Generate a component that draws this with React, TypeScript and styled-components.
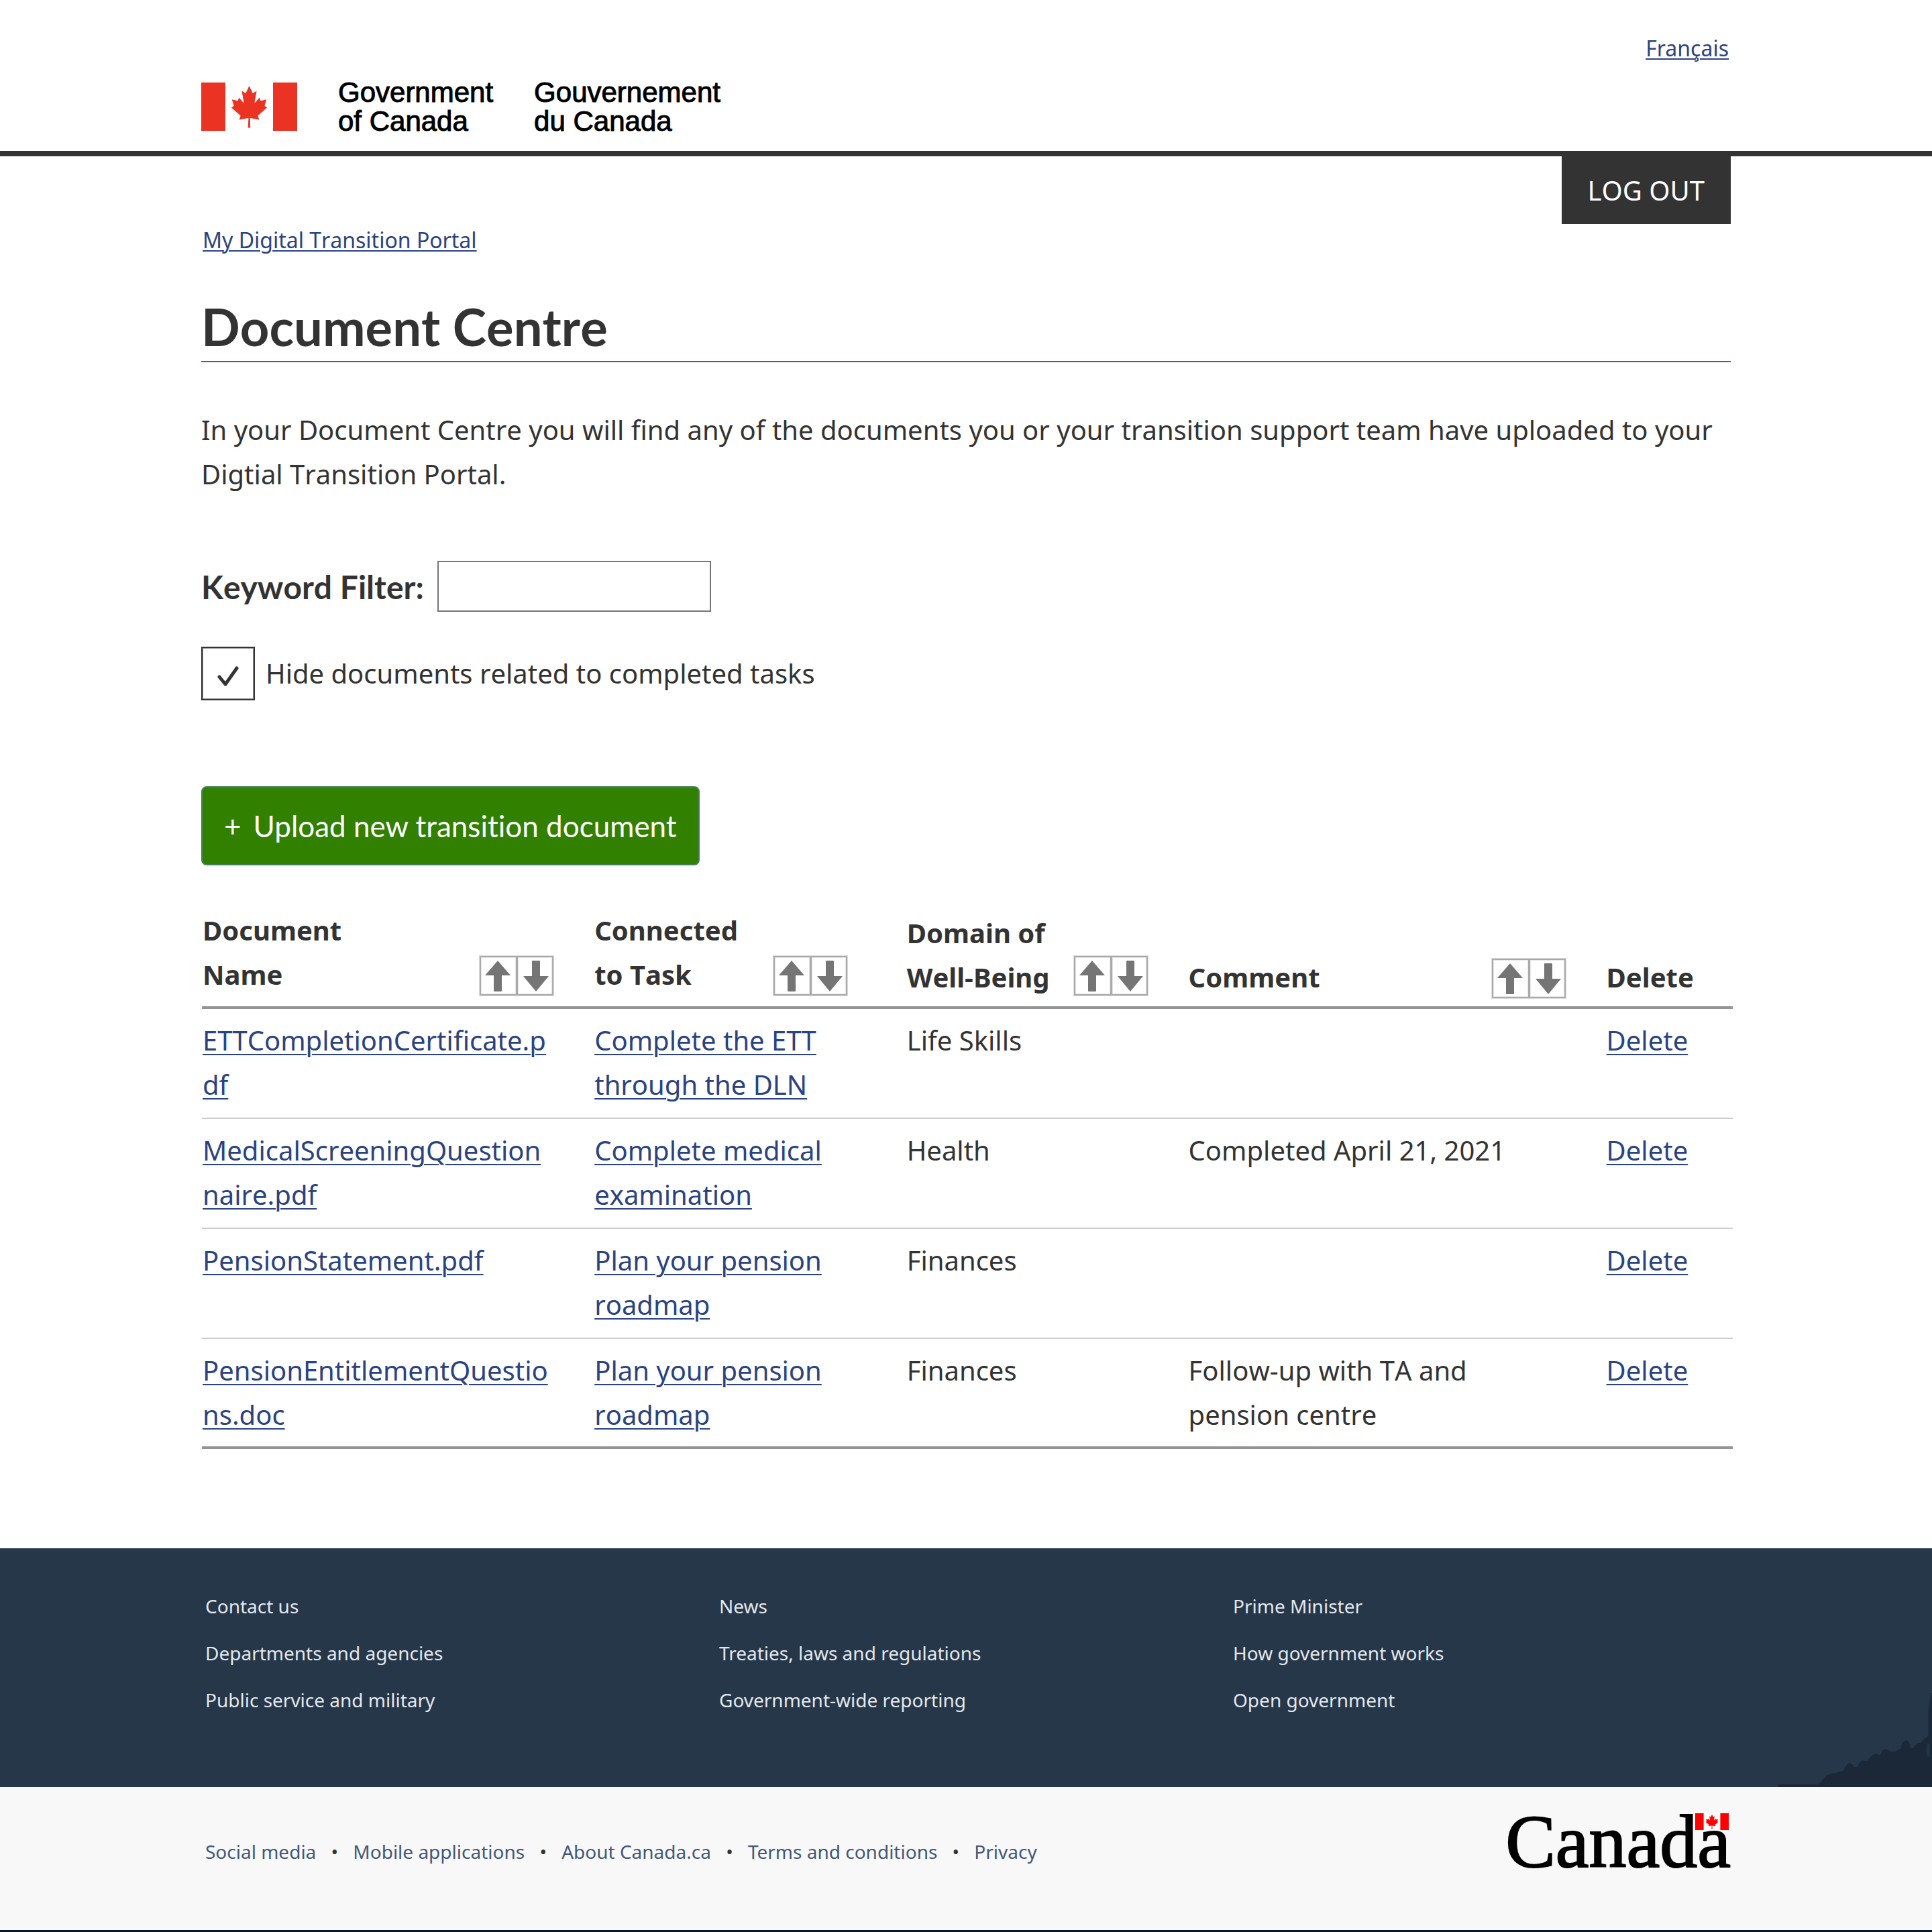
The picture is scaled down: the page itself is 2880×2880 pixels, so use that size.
import React, { useState } from "react";
import styled, { createGlobalStyle } from "styled-components";

const GlobalStyle = createGlobalStyle`
  *, *::before, *::after { box-sizing: border-box; }
  body {
    margin: 0;
    background: #fff;
    color: #333;
    font-family: "Noto Sans", "Open Sans", sans-serif;
    font-size: 40px;
    line-height: 66px;
  }
  main { font-kerning: none; }
`;

const Container = styled.div`
  width: 92%;
  max-width: 2280px;
  margin: 0 auto;
`;

const Link = styled.a<{ $small?: boolean }>`
  color: #2b4380;
  font-size: ${(p) => (p.$small ? "32px" : "40px")};
  line-height: ${(p) => (p.$small ? "44px" : "66px")};
  text-decoration: underline 2px;
  text-underline-offset: ${(p) => (p.$small ? "3px" : "5px")};
`;

/* ---------- Header ---------- */

const Header = styled.header`
  padding: 50px 0 23px;
  border-bottom: 8px solid #333;
`;

const LanguageBar = styled.div`
  display: flex;
  justify-content: flex-end;
  padding-right: 3px;
  margin-bottom: 22px;
`;

const Brand = styled.div`
  display: flex;
  align-items: center;
  gap: 61px;
`;

const BrandName = styled.span`
  font-family: "Liberation Sans", Arial, sans-serif;
  font-size: 42px;
  line-height: 43px;
  color: #000;
  -webkit-text-stroke: 1px #000;
`;

const LEAF =
  "m-90 2030 45-863a95 95 0 0 0-111-98l-859 151 116-320a65 65 0 0 0-20-73l-941-762 212-99a65 65 0 0 0 34-79l-186-572 542 115a65 65 0 0 0 73-38l105-247 423 454a65 65 0 0 0 111-57l-204-1052 327 189a65 65 0 0 0 91-27l332-652 332 652a65 65 0 0 0 91 27l327-189-204 1052a65 65 0 0 0 111 57l423-454 105 247a65 65 0 0 0 73 38l542-115-186 572a65 65 0 0 0 34 79l212 99-941 762a65 65 0 0 0-20 73l116 320-859-151a95 95 0 0 0-111 98l45 863z";

function Flag({ width, height, color }: { width: number; height: number; color: string }) {
  return (
    <svg width={width} height={height} viewBox="0 0 143 72" preserveAspectRatio="none" aria-hidden="true">
      <rect x="36" width="71" height="72" fill="#fff" />
      <rect width="36" height="72" fill={color} />
      <rect x="107" width="36" height="72" fill={color} />
      <path
        d={LEAF}
        transform="translate(71.5 36.3) scale(0.0139 0.0151)"
        fill={color}
        stroke={color}
        strokeWidth="70"
      />
    </svg>
  );
}

/* ---------- Page top ---------- */

const SessionBar = styled.div`
  display: flex;
  justify-content: flex-end;
`;

const LogoutButton = styled.button`
  border: 0;
  padding: 18px 39px 17px;
  background: #333;
  color: #fff;
  font: inherit;
  text-transform: uppercase;
  cursor: pointer;
`;

const Breadcrumb = styled.nav`
  display: flex;
  padding: 2px;
`;

const Title = styled.h1`
  margin: 59px 0 68px;
  padding-bottom: 5px;
  border-bottom: 2px solid #af3c43;
  font-family: Lato, sans-serif;
  font-size: 76px;
  line-height: 92px;
  font-weight: 700;
`;

const Intro = styled.p`
  margin: 0 0 96px;
`;

/* ---------- Filters ---------- */

const FilterRow = styled.div`
  display: flex;
  align-items: center;
  gap: 20px;
`;

const FilterLabel = styled.label`
  padding-top: 2px;
  font-family: Lato, sans-serif;
  font-size: 48px;
  line-height: 58px;
  font-weight: 700;
`;

const FilterInput = styled.input`
  width: 408px;
  height: 76px;
  padding: 0 16px;
  border: 2px solid #757575;
  background: #fff;
  color: inherit;
  font: inherit;
`;

const CheckRow = styled.label`
  display: flex;
  align-items: center;
  gap: 16px;
  width: fit-content;
  margin: 52px 0 128px;
`;

const CheckBox = styled.span`
  display: grid;
  width: 80px;
  height: 80px;

  > * {
    grid-area: 1 / 1;
  }

  > svg {
    place-self: center;
    pointer-events: none;
    visibility: hidden;
  }

  > input:checked + svg {
    visibility: visible;
  }
`;

const CheckInput = styled.input`
  appearance: none;
  width: 80px;
  height: 80px;
  margin: 0;
  border: 2px solid #333;
  box-shadow: inset 0 0 0 1px #999;
  background: #fff;
`;

const UploadButton = styled.button`
  display: flex;
  align-items: center;
  gap: 18px;
  padding: 24px 32px;
  border: 2px solid #458259;
  border-radius: 8px;
  background: #318000;
  color: #fff;
  font-family: Lato, sans-serif;
  font-size: 44px;
  line-height: 66px;
  font-kerning: normal;
  font-variant-ligatures: none;
  cursor: pointer;
`;

/* ---------- Table ---------- */

const Table = styled.table`
  width: calc(100% + 2px);
  margin: 64px 0 148px 1px;
  table-layout: fixed;
  border-collapse: separate;
  border-spacing: 0;
  text-align: left;
`;

const Col = styled.col<{ $share?: number }>`
  width: ${(p) => (p.$share ? `${p.$share}%` : "auto")};
`;

const HeadCell = styled.th<{ $gap?: number; $raised?: boolean }>`
  padding: 0 ${(p) => p.$gap ?? 59}px ${(p) => (p.$raised ? 14 : 10)}px 1px;
  border-bottom: 4px solid #959595;
  vertical-align: bottom;
`;

const HeadContent = styled.div`
  display: flex;
  align-items: flex-end;
  justify-content: space-between;
`;

const Sorter = styled.span<{ $lift: number }>`
  display: flex;
  flex: none;
  margin-bottom: ${(p) => p.$lift}px;
  outline: 1px solid #ddd;
  outline-offset: -1px;
  padding: 1px;
`;

const SortButton = styled.button`
  display: flex;
  align-items: center;
  justify-content: center;
  width: 56px;
  height: 59px;
  padding: 0 2px 0 0;
  border: 2px solid #aaa;
  box-shadow: inset 0 0 0 1px #e6e6e6;
  background: #fff;
  color: #757575;
  cursor: pointer;

  & + & {
    width: 54px;
    padding: 0 0 0 3px;
    border-left-width: 1px;
  }

  > svg {
    flex: none;
  }
`;

const Cell = styled.td<{ $gap?: number; $breakAll?: boolean }>`
  padding: 14px ${(p) => p.$gap ?? 59}px 16px 1px;
  border-bottom: 2px solid #ccc;
  vertical-align: top;
  word-break: ${(p) => (p.$breakAll ? "break-all" : "normal")};

  tr:last-child > & {
    padding-bottom: 14px;
    border-bottom: 4px solid #959595;
  }
`;

/* ---------- Footer ---------- */

const FooterMain = styled.section`
  position: relative;
  padding: 67px 0 111px;
  background: #26374a;
`;

const FooterColumns = styled.ul`
  display: grid;
  grid-template-columns: repeat(3, 1fr);
  grid-template-rows: repeat(3, auto);
  grid-auto-flow: column;
  gap: 32px 24px;
  margin: 0;
  padding: 0 0 0 6px;
  list-style: none;
  font-size: 28px;
  line-height: 38px;
`;

const FooterLink = styled.a<{ $dark?: boolean }>`
  color: ${(p) => (p.$dark ? "#42577a" : "#e4e8ec")};
  text-decoration: none;
`;

const Skyline = styled.svg`
  position: absolute;
  right: 0;
  bottom: 0;
`;

const FooterBar = styled.section`
  padding: 31px 0 82px;
  border-bottom: 3px solid #06182a;
  background: #f8f8f8;
`;

const FooterBarContent = styled(Container)`
  display: flex;
  justify-content: space-between;
`;

const BarLinks = styled.ul`
  display: flex;
  margin: 0;
  padding: 46px 0 0 6px;
  list-style: none;
  font-size: 28px;
  line-height: 38px;

  > li + li::before {
    content: "•";
    display: inline-block;
    width: 55px;
    text-align: center;
    color: #333;
  }
`;

const Wordmark = styled.div`
  position: relative;
  font-family: "Liberation Serif", "Times New Roman", serif;
  font-size: 112px;
  line-height: 100px;
  color: #000;
  -webkit-text-stroke: 2px #000;

  > svg {
    position: absolute;
    top: 8px;
    right: 3px;
  }
`;

interface Doc {
  name: string;
  task: string;
  domain: string;
  comment: string;
}

const documents: Doc[] = [
  { name: "ETTCompletionCertificate.pdf", task: "Complete the ETT through the DLN", domain: "Life Skills", comment: "" },
  { name: "MedicalScreeningQuestionnaire.pdf", task: "Complete medical examination", domain: "Health", comment: "Completed April 21, 2021" },
  { name: "PensionStatement.pdf", task: "Plan your pension roadmap", domain: "Finances", comment: "" },
  { name: "PensionEntitlementQuestions.doc", task: "Plan your pension roadmap", domain: "Finances", comment: "Follow-up with TA and pension centre" },
];

const footerLinks = [
  "Contact us",
  "Departments and agencies",
  "Public service and military",
  "News",
  "Treaties, laws and regulations",
  "Government-wide reporting",
  "Prime Minister",
  "How government works",
  "Open government",
];

const barLinks = ["Social media", "Mobile applications", "About Canada.ca", "Terms and conditions", "Privacy"];

function SortControls({ label, lift }: { label: string; lift: number }) {
  return (
    <Sorter $lift={lift}>
      <SortButton type="button" aria-label={`Sort ${label} ascending`}>
        <svg width="38" height="48" viewBox="0 0 38 48">
          <path d="M19 1 38 23H25V46Q25 47 24 47H14Q13 47 13 46V23H0Z" fill="currentColor" />
        </svg>
      </SortButton>
      <SortButton type="button" aria-label={`Sort ${label} descending`}>
        <svg width="38" height="48" viewBox="0 0 38 48">
          <path d="M19 47 38 24H25V2Q25 1 24 1H14Q13 1 13 2V24H0Z" fill="currentColor" />
        </svg>
      </SortButton>
    </Sorter>
  );
}

export default function App() {
  const [keyword, setKeyword] = useState("");
  const [hideCompleted, setHideCompleted] = useState(true);
  const shown = documents.filter((d) => d.name.toLowerCase().includes(keyword.toLowerCase()));

  return (
    <>
      <GlobalStyle />
      <Header>
        <Container>
          <LanguageBar>
            <Link $small href="#fr" lang="fr">Français</Link>
          </LanguageBar>
          <Brand>
            <Flag width={143} height={72} color="#ea3323" />
            <BrandName>
              Government
              <br />
              of Canada
            </BrandName>
            <BrandName lang="fr">
              Gouvernement
              <br />
              du Canada
            </BrandName>
          </Brand>
        </Container>
      </Header>

      <Container as="main">
        <SessionBar>
          <LogoutButton type="button">Log out</LogoutButton>
        </SessionBar>
        <Breadcrumb aria-label="Breadcrumb">
          <Link $small href="#portal">My Digital Transition Portal</Link>
        </Breadcrumb>
        <Title>Document Centre</Title>
        <Intro>
          In your Document Centre you will find any of the documents you or your transition support team have
          uploaded to your Digtial Transition Portal.
        </Intro>

        <FilterRow>
          <FilterLabel htmlFor="keyword">Keyword Filter:</FilterLabel>
          <FilterInput id="keyword" type="text" value={keyword} onChange={(e) => setKeyword(e.target.value)} />
        </FilterRow>
        <CheckRow>
          <CheckBox>
            <CheckInput
              type="checkbox"
              checked={hideCompleted}
              onChange={(e) => setHideCompleted(e.target.checked)}
            />
            <svg width="80" height="80" viewBox="0 0 80 80" aria-hidden="true">
              <path
                d="M27 45 36 56 53 32"
                fill="none"
                stroke="#333"
                strokeWidth="5"
                strokeLinecap="round"
                strokeLinejoin="round"
              />
            </svg>
          </CheckBox>
          Hide documents related to completed tasks
        </CheckRow>

        <UploadButton type="button">
          <span aria-hidden="true">+</span>
          <span>Upload new transition document</span>
        </UploadButton>

        <Table>
          <colgroup>
            <Col $share={25.6} />
            <Col $share={20.4} />
            <Col $share={18.4} />
            <Col $share={27.3} />
            <Col />
          </colgroup>
          <thead>
            <tr>
              <HeadCell scope="col" $raised>
                <HeadContent>
                  <span>Document<br />Name</span>
                  <SortControls label="document name" lift={1} />
                </HeadContent>
              </HeadCell>
              <HeadCell scope="col" $raised $gap={87}>
                <HeadContent>
                  <span>Connected<br />to Task</span>
                  <SortControls label="task" lift={1} />
                </HeadContent>
              </HeadCell>
              <HeadCell scope="col">
                <HeadContent>
                  <span>Domain of<br />Well-Being</span>
                  <SortControls label="domain" lift={5} />
                </HeadContent>
              </HeadCell>
              <HeadCell scope="col">
                <HeadContent>
                  <span>Comment</span>
                  <SortControls label="comment" lift={1} />
                </HeadContent>
              </HeadCell>
              <HeadCell scope="col" $gap={0}>Delete</HeadCell>
            </tr>
          </thead>
          <tbody>
            {shown.map((d) => (
              <tr key={d.name}>
                <Cell $breakAll><Link href="#document">{d.name}</Link></Cell>
                <Cell $gap={87}><Link href="#task">{d.task}</Link></Cell>
                <Cell>{d.domain}</Cell>
                <Cell>{d.comment}</Cell>
                <Cell $gap={0}><Link href="#delete">Delete</Link></Cell>
              </tr>
            ))}
          </tbody>
        </Table>
      </Container>

      <footer>
        <FooterMain>
          <Container>
            <FooterColumns>
              {footerLinks.map((text) => (
                <li key={text}><FooterLink href="#footer">{text}</FooterLink></li>
              ))}
            </FooterColumns>
          </Container>
          <Skyline width="230" height="140" viewBox="150 72 690 420" aria-hidden="true">
            <path
              d="M152 492V480H330Q345 470 352 458L366 442Q380 430 412 428L446 418Q455 390 470 384Q486 386 490 402H506Q514 380 528 372L548 376L575 348Q590 340 606 350L620 326Q634 316 652 332L672 332Q690 326 700 320Q705 286 726 281Q742 290 744 318H756Q764 296 788 294L806 276L824 262V140Q832 110 834 72H840V492Z"
              fill="#1b2838"
            />
            <path d="M818 294Q808 324 820 356H832V300Z" fill="#223247" />
          </Skyline>
        </FooterMain>
        <FooterBar>
          <FooterBarContent>
            <BarLinks>
              {barLinks.map((text) => (
                <li key={text}><FooterLink $dark href="#about">{text}</FooterLink></li>
              ))}
            </BarLinks>
            <Wordmark>
              Canada
              <Flag width={50} height={25} color="#f00" />
            </Wordmark>
          </FooterBarContent>
        </FooterBar>
      </footer>
    </>
  );
}
